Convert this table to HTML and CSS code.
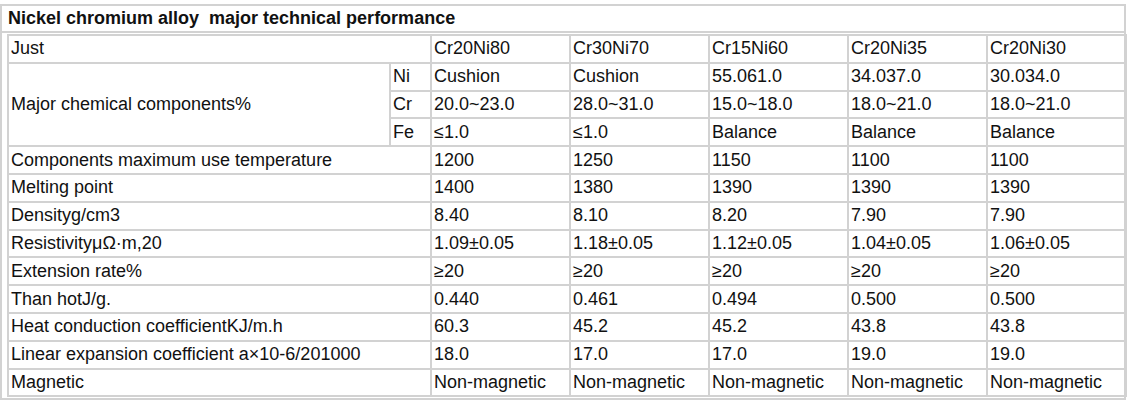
FILE: index.html
```html
<!DOCTYPE html>
<html>
<head>
<meta charset="utf-8">
<link rel="stylesheet" href="styles.css">
</head>
<body>
<div class="sheet">
  <div class="title">Nickel chromium alloy&nbsp; major technical performance</div>
  <table class="grid">
    <colgroup>
      <col class="c-label"><col class="c-sub"><col class="c-val"><col class="c-val"><col class="c-val"><col class="c-val"><col class="c-val">
    </colgroup>
    <tr><td colspan="2">Just</td><td>Cr20Ni80</td><td>Cr30Ni70</td><td>Cr15Ni60</td><td>Cr20Ni35</td><td>Cr20Ni30</td></tr>
    <tr><td rowspan="3">Major chemical components%</td><td>Ni</td><td>Cushion</td><td>Cushion</td><td>55.061.0</td><td>34.037.0</td><td>30.034.0</td></tr>
    <tr><td>Cr</td><td>20.0~23.0</td><td>28.0~31.0</td><td>15.0~18.0</td><td>18.0~21.0</td><td>18.0~21.0</td></tr>
    <tr><td>Fe</td><td>≤1.0</td><td>≤1.0</td><td>Balance</td><td>Balance</td><td>Balance</td></tr>
    <tr><td colspan="2">Components maximum use temperature</td><td>1200</td><td>1250</td><td>1150</td><td>1100</td><td>1100</td></tr>
    <tr><td colspan="2">Melting point</td><td>1400</td><td>1380</td><td>1390</td><td>1390</td><td>1390</td></tr>
    <tr><td colspan="2">Densityg/cm3</td><td>8.40</td><td>8.10</td><td>8.20</td><td>7.90</td><td>7.90</td></tr>
    <tr><td colspan="2">ResistivityμΩ·m,20</td><td>1.09±0.05</td><td>1.18±0.05</td><td>1.12±0.05</td><td>1.04±0.05</td><td>1.06±0.05</td></tr>
    <tr><td colspan="2">Extension rate%</td><td>≥20</td><td>≥20</td><td>≥20</td><td>≥20</td><td>≥20</td></tr>
    <tr><td colspan="2">Than hotJ/g.</td><td>0.440</td><td>0.461</td><td>0.494</td><td>0.500</td><td>0.500</td></tr>
    <tr><td colspan="2">Heat conduction coefficientKJ/m.h</td><td>60.3</td><td>45.2</td><td>45.2</td><td>43.8</td><td>43.8</td></tr>
    <tr><td colspan="2">Linear expansion coefficient a×10-6/201000</td><td>18.0</td><td>17.0</td><td>17.0</td><td>19.0</td><td>19.0</td></tr>
    <tr><td colspan="2">Magnetic</td><td>Non-magnetic</td><td>Non-magnetic</td><td>Non-magnetic</td><td>Non-magnetic</td><td>Non-magnetic</td></tr>
  </table>
</div>
</body>
</html>
```
FILE: styles.css
```css
html, body {
  margin: 0;
  padding: 0;
  background: #ffffff;
}
body {
  padding-top: 4px;
  font-family: "Liberation Sans", Arial, sans-serif;
  color: #111111;
}
.sheet {
  width: 1122px;
  border: 2px solid #d2d2d2;
  padding: 0 0 1px 0;
}
.title {
  height: 25px;
  line-height: 25px;
  padding-left: 6px;
  font-size: 18px;
  font-weight: bold;
  border-bottom: 2px solid #d2d2d2;
  margin-bottom: 1px;
}
.grid {
  border-collapse: collapse;
  table-layout: fixed;
  width: 1118px;
  margin-left: 5px;
  font-size: 18px;
}
.c-label { width: 382px; }
.c-sub { width: 41px; }
.c-val { width: 139px; }
.grid td {
  border: 2px solid #d2d2d2;
  height: 25.8px;
  padding: 0 2px;
  line-height: 21px;
  white-space: nowrap;
  vertical-align: middle;
}
```
